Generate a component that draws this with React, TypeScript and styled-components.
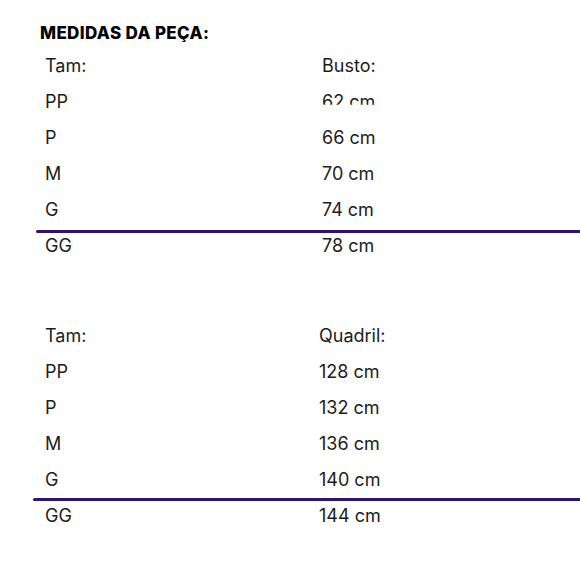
import styled, { createGlobalStyle } from "styled-components";

const GlobalStyle = createGlobalStyle`
  html, body {
    margin: 0;
    padding: 0;
    background: #ffffff;
    overflow: hidden;
  }
  body {
    font-family: Inter, "Noto Sans", sans-serif;
    color: #1a1a1a;
  }
`;

const Page = styled.main`
  width: 580px;
  height: 580px;
  padding-top: 21px;
  box-sizing: border-box;
`;

const Title = styled.h2`
  margin: 0 0 2px 40px;
  font-size: 17px;
  line-height: 24px;
  font-weight: 800;
  color: #000000;
  letter-spacing: 0.35px;
`;

const Table = styled.section<{ $left: number; $top: number }>`
  margin: ${(p) => p.$top}px 0 0 ${(p) => p.$left}px;
`;

const Row = styled.div<{ $col: number; $height?: number }>`
  display: grid;
  grid-template-columns: ${(p) => p.$col}px 1fr;
  align-items: center;
  height: ${(p) => p.$height ?? 36}px;
  font-size: 18px;
  font-weight: 400;
  color: #1c1c1c;
`;

const Divider = styled.hr<{ $gap: number }>`
  margin: ${(p) => p.$gap}px 0 0 0;
  border: none;
  height: 3px;
  background: #2d1470;
  border-radius: 2px 0 0 2px;
`;

const Clipped = styled.span`
  clip-path: inset(0 0 32% 0);
`;

type Props = {
  left: number;
  top: number;
  col: number;
  label: string;
  values: string[];
  gap: number;
  lastHeight: number;
  clipFirst?: boolean;
};

const sizes = ["PP", "P", "M", "G", "GG"];

const SizeTable = ({ left, top, col, label, values, gap, lastHeight, clipFirst }: Props) => {
  const pad = 45 - left;
  return (
    <Table $left={left} $top={top}>
      <Row $col={col} style={{ paddingLeft: pad }}>
        <span>Tam:</span>
        <span>{label}</span>
      </Row>
      {sizes.slice(0, 4).map((s, i) => (
        <Row key={s} $col={col} style={{ paddingLeft: pad }}>
          <span>{s}</span>
          {clipFirst && i === 0 ? <Clipped>{values[i]}</Clipped> : <span>{values[i]}</span>}
        </Row>
      ))}
      <Divider $gap={gap} />
      <Row $col={col} $height={lastHeight} style={{ paddingLeft: pad }}>
        <span>GG</span>
        <span>{values[4]}</span>
      </Row>
    </Table>
  );
};

export default function App() {
  return (
    <>
      <GlobalStyle />
      <Page>
        <Title>MEDIDAS DA PEÇA:</Title>
        <SizeTable
          left={36}
          top={0}
          col={277}
          label="Busto:"
          values={["62 cm", "66 cm", "70 cm", "74 cm", "78 cm"]}
          gap={3}
          lastHeight={24}
          clipFirst
        />
        <SizeTable
          left={33}
          top={60}
          col={274}
          label="Quadril:"
          values={["128 cm", "132 cm", "136 cm", "140 cm", "144 cm"]}
          gap={1}
          lastHeight={28}
        />
      </Page>
    </>
  );
}
